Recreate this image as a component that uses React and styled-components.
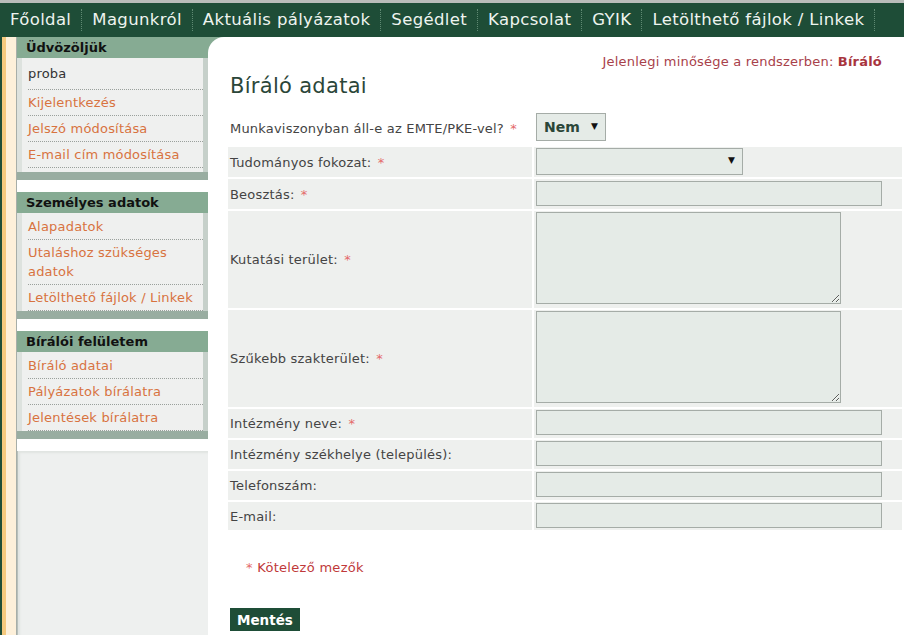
import React from 'react';
import styled, { createGlobalStyle } from 'styled-components';

const GlobalStyle = createGlobalStyle`
  html, body {
    margin: 0;
    padding: 0;
    background: #ffffff;
  }
  body {
    font-family: "DejaVu Sans", Verdana, sans-serif;
    font-size: 13px;
    color: #444;
  }
`;

const Page = styled.div`
  display: flex;
  flex-direction: column;
  height: 635px;
  overflow: hidden;
`;

const NavBar = styled.nav`
  display: flex;
  align-items: center;
  height: 34px;
  border-top: 3px solid #b9bdba;
  background: #1e4d37;
`;

const NavItem = styled.a`
  display: block;
  padding: 0 10px;
  color: #eef4ef;
  font-size: 16.5px;
  letter-spacing: 0.35px;
  line-height: 22px;
  text-decoration: none;
  border-right: 1px dotted #5f8a73;
  white-space: nowrap;
`;

const Body = styled.div`
  flex: 1;
  display: flex;
  min-height: 0;
  background: linear-gradient(#86ab93 0 21px, #ffffff 21px);
`;

const Rail = styled.div`
  width: 17px;
  flex: none;
  background: linear-gradient(
    to right,
    #1e4d37 0 2px,
    #f4c97e 2px 6px,
    #fdf0da 6px 16px,
    #a7aea9 16px 17px
  );
`;

const Sidebar = styled.aside`
  width: 191px;
  flex: none;
  display: flex;
  flex-direction: column;
  gap: 12px;
  background: #ffffff;
`;

const Section = styled.div`
  display: flex;
  flex-direction: column;
`;

const SectionHead = styled.div`
  height: 21px;
  line-height: 21px;
  padding-left: 9px;
  background: #86ab93;
  color: #111;
  font-weight: bold;
  font-size: 13px;
`;

const ItemBox = styled.ul`
  list-style: none;
  margin: 0;
  padding: 1px 0 ${p => p.$pb || 0}px;
  background: #eff0ef;
  border-left: 5px solid #dde2de;
  border-right: 5px solid #c6d0ca;
`;

const Item = styled.li`
  margin-left: 6px;
  padding: ${p => (p.$plain ? '5px 0 6px' : '3px 0 3px')};
  line-height: 19px;
  border-bottom: 1px dotted #9aa09c;
  color: ${p => (p.$plain ? '#333' : '#d8733f')};
  font-size: 13px;
  letter-spacing: 0.2px;
`;

const SectionFoot = styled.div`
  height: 8px;
  background: #99ada1;
`;

const Filler = styled.div`
  flex: 1;
  background: #eef0ef;
  border-left: 1px solid #b8c0bb;
  box-shadow: inset 2px 2px 2px #e0e4e1;
`;

const Main = styled.main`
  flex: 1;
  background: #ffffff;
  border-top-left-radius: 16px;
  padding: 16px 0 0 18px;
`;

const Status = styled.div`
  text-align: right;
  padding-right: 22px;
  color: #a8414a;
  font-size: 13px;
  letter-spacing: 0.2px;
  line-height: 17px;
  b {
    color: #a8343e;
  }
`;

const Title = styled.h1`
  margin: 3px 0 11px 4px;
  font-weight: normal;
  font-size: 21px;
  line-height: 26px;
  color: #2b4639;
  letter-spacing: 0.3px;
`;

const FormTable = styled.table`
  width: 100%;
  border-spacing: 2px;
`;

const Row = styled.tr`
  background: ${p => (p.$white ? '#ffffff' : '#eef0ee')};
`;

const LabelCell = styled.td`
  width: 300px;
  padding: 0 2px;
  color: #444;
  font-size: 13px;
  letter-spacing: 0.2px;
  vertical-align: middle;
`;

const Req = styled.span`
  color: #e46a6a;
  margin-left: 2px;
`;

const FieldCell = styled.td`
  padding: ${p => p.$pad || '2px 2px 3px'};
  vertical-align: top;
`;

const TextInput = styled.input`
  display: block;
  box-sizing: border-box;
  width: 346px;
  height: 25px;
  margin: 0;
  border: 1px solid #a5aca7;
  background: #e5ebe7;
`;

const TextArea = styled.textarea`
  display: block;
  box-sizing: border-box;
  width: 305px;
  height: 92px;
  margin: 0;
  border: 1px solid #a5aca7;
  background: #e5ebe7;
  resize: both;
`;

const SelectBox = styled.div`
  box-sizing: border-box;
  display: flex;
  align-items: center;
  justify-content: space-between;
  width: ${p => p.$w}px;
  height: ${p => p.$h}px;
  padding: 0 7px;
  border: 1px solid #a5aca7;
  background: #e5ebe7;
  color: #2b4639;
  font-weight: bold;
  font-size: 14px;
`;

const Arrow = styled.span`
  font-size: 9px;
  color: #111;
  margin-top: -3px;
`;

const Note = styled.div`
  margin: 28px 0 0 20px;
  color: #c0393a;
  font-size: 13px;
  letter-spacing: 0.3px;
`;

const NoteStar = styled.span`
  color: #e46a6a;
`;

const SaveButton = styled.button`
  margin: 33px 0 0 4px;
  padding: 0 7px;
  height: 23px;
  border: none;
  background: #1e4d37;
  color: #ffffff;
  font-family: "DejaVu Sans", Verdana, sans-serif;
  font-weight: bold;
  font-size: 13.5px;
`;

const nav = [
  'Főoldal',
  'Magunkról',
  'Aktuális pályázatok',
  'Segédlet',
  'Kapcsolat',
  'GYIK',
  'Letölthető fájlok / Linkek',
];

const sections = [
  {
    title: 'Üdvözöljük',
    pb: 4,
    items: [
      { t: 'proba', plain: true },
      { t: 'Kijelentkezés' },
      { t: 'Jelszó módosítása' },
      { t: 'E-mail cím módosítása' },
    ],
  },
  {
    title: 'Személyes adatok',
    items: [
      { t: 'Alapadatok' },
      { t: 'Utaláshoz szükséges adatok' },
      { t: 'Letölthető fájlok / Linkek' },
    ],
  },
  {
    title: 'Bírálói felületem',
    items: [
      { t: 'Bíráló adatai' },
      { t: 'Pályázatok bírálatra' },
      { t: 'Jelentések bírálatra' },
    ],
  },
];

const fields = [
  { label: 'Tudományos fokozat:', req: true, kind: 'select', pad: '1px 2px 2px' },
  { label: 'Beosztás:', req: true, kind: 'input' },
  { label: 'Kutatási terület:', req: true, kind: 'area', pad: '1px 2px 4px' },
  { label: 'Szűkebb szakterület:', req: true, kind: 'area', pad: '1px 2px 4px' },
  { label: 'Intézmény neve:', req: true, kind: 'input', pad: '1px 2px 3px' },
  { label: 'Intézmény székhelye (település):', kind: 'input', pad: '1px 2px 3px' },
  { label: 'Telefonszám:', kind: 'input', pad: '1px 2px 3px' },
  { label: 'E-mail:', kind: 'input', pad: '1px 2px 2px' },
];

const Field = ({ kind }) => {
  if (kind === 'select')
    return (
      <SelectBox $w={207} $h={27}>
        <span />
        <Arrow>▼</Arrow>
      </SelectBox>
    );
  if (kind === 'area') return <TextArea />;
  return <TextInput />;
};

export default function App() {
  return (
    <Page>
      <GlobalStyle />
      <NavBar>
        {nav.map(n => (
          <NavItem key={n}>{n}</NavItem>
        ))}
      </NavBar>
      <Body>
        <Rail />
        <Sidebar>
          {sections.map(s => (
            <Section key={s.title}>
              <SectionHead>{s.title}</SectionHead>
              <ItemBox $pb={s.pb}>
                {s.items.map(i => (
                  <Item key={i.t} $plain={i.plain}>
                    {i.t}
                  </Item>
                ))}
              </ItemBox>
              <SectionFoot />
            </Section>
          ))}
          <Filler />
        </Sidebar>
        <Main>
          <Status>
            Jelenlegi minősége a rendszerben: <b>Bíráló</b>
          </Status>
          <Title>Bíráló adatai</Title>
          <FormTable>
            <tbody>
              <Row $white>
                <LabelCell>
                  Munkaviszonyban áll-e az EMTE/PKE-vel? <Req>*</Req>
                </LabelCell>
                <FieldCell $pad="1px 2px 4px">
                  <SelectBox $w={70} $h={28}>
                    Nem <Arrow>▼</Arrow>
                  </SelectBox>
                </FieldCell>
              </Row>
              {fields.map(f => (
                <Row key={f.label}>
                  <LabelCell>
                    {f.label}
                    {f.req && (
                      <>
                        {' '}
                        <Req>*</Req>
                      </>
                    )}
                  </LabelCell>
                  <FieldCell $pad={f.pad}>
                    <Field kind={f.kind} />
                  </FieldCell>
                </Row>
              ))}
            </tbody>
          </FormTable>
          <Note>
            <NoteStar>*</NoteStar> Kötelező mezők
          </Note>
          <SaveButton>Mentés</SaveButton>
        </Main>
      </Body>
    </Page>
  );
}
